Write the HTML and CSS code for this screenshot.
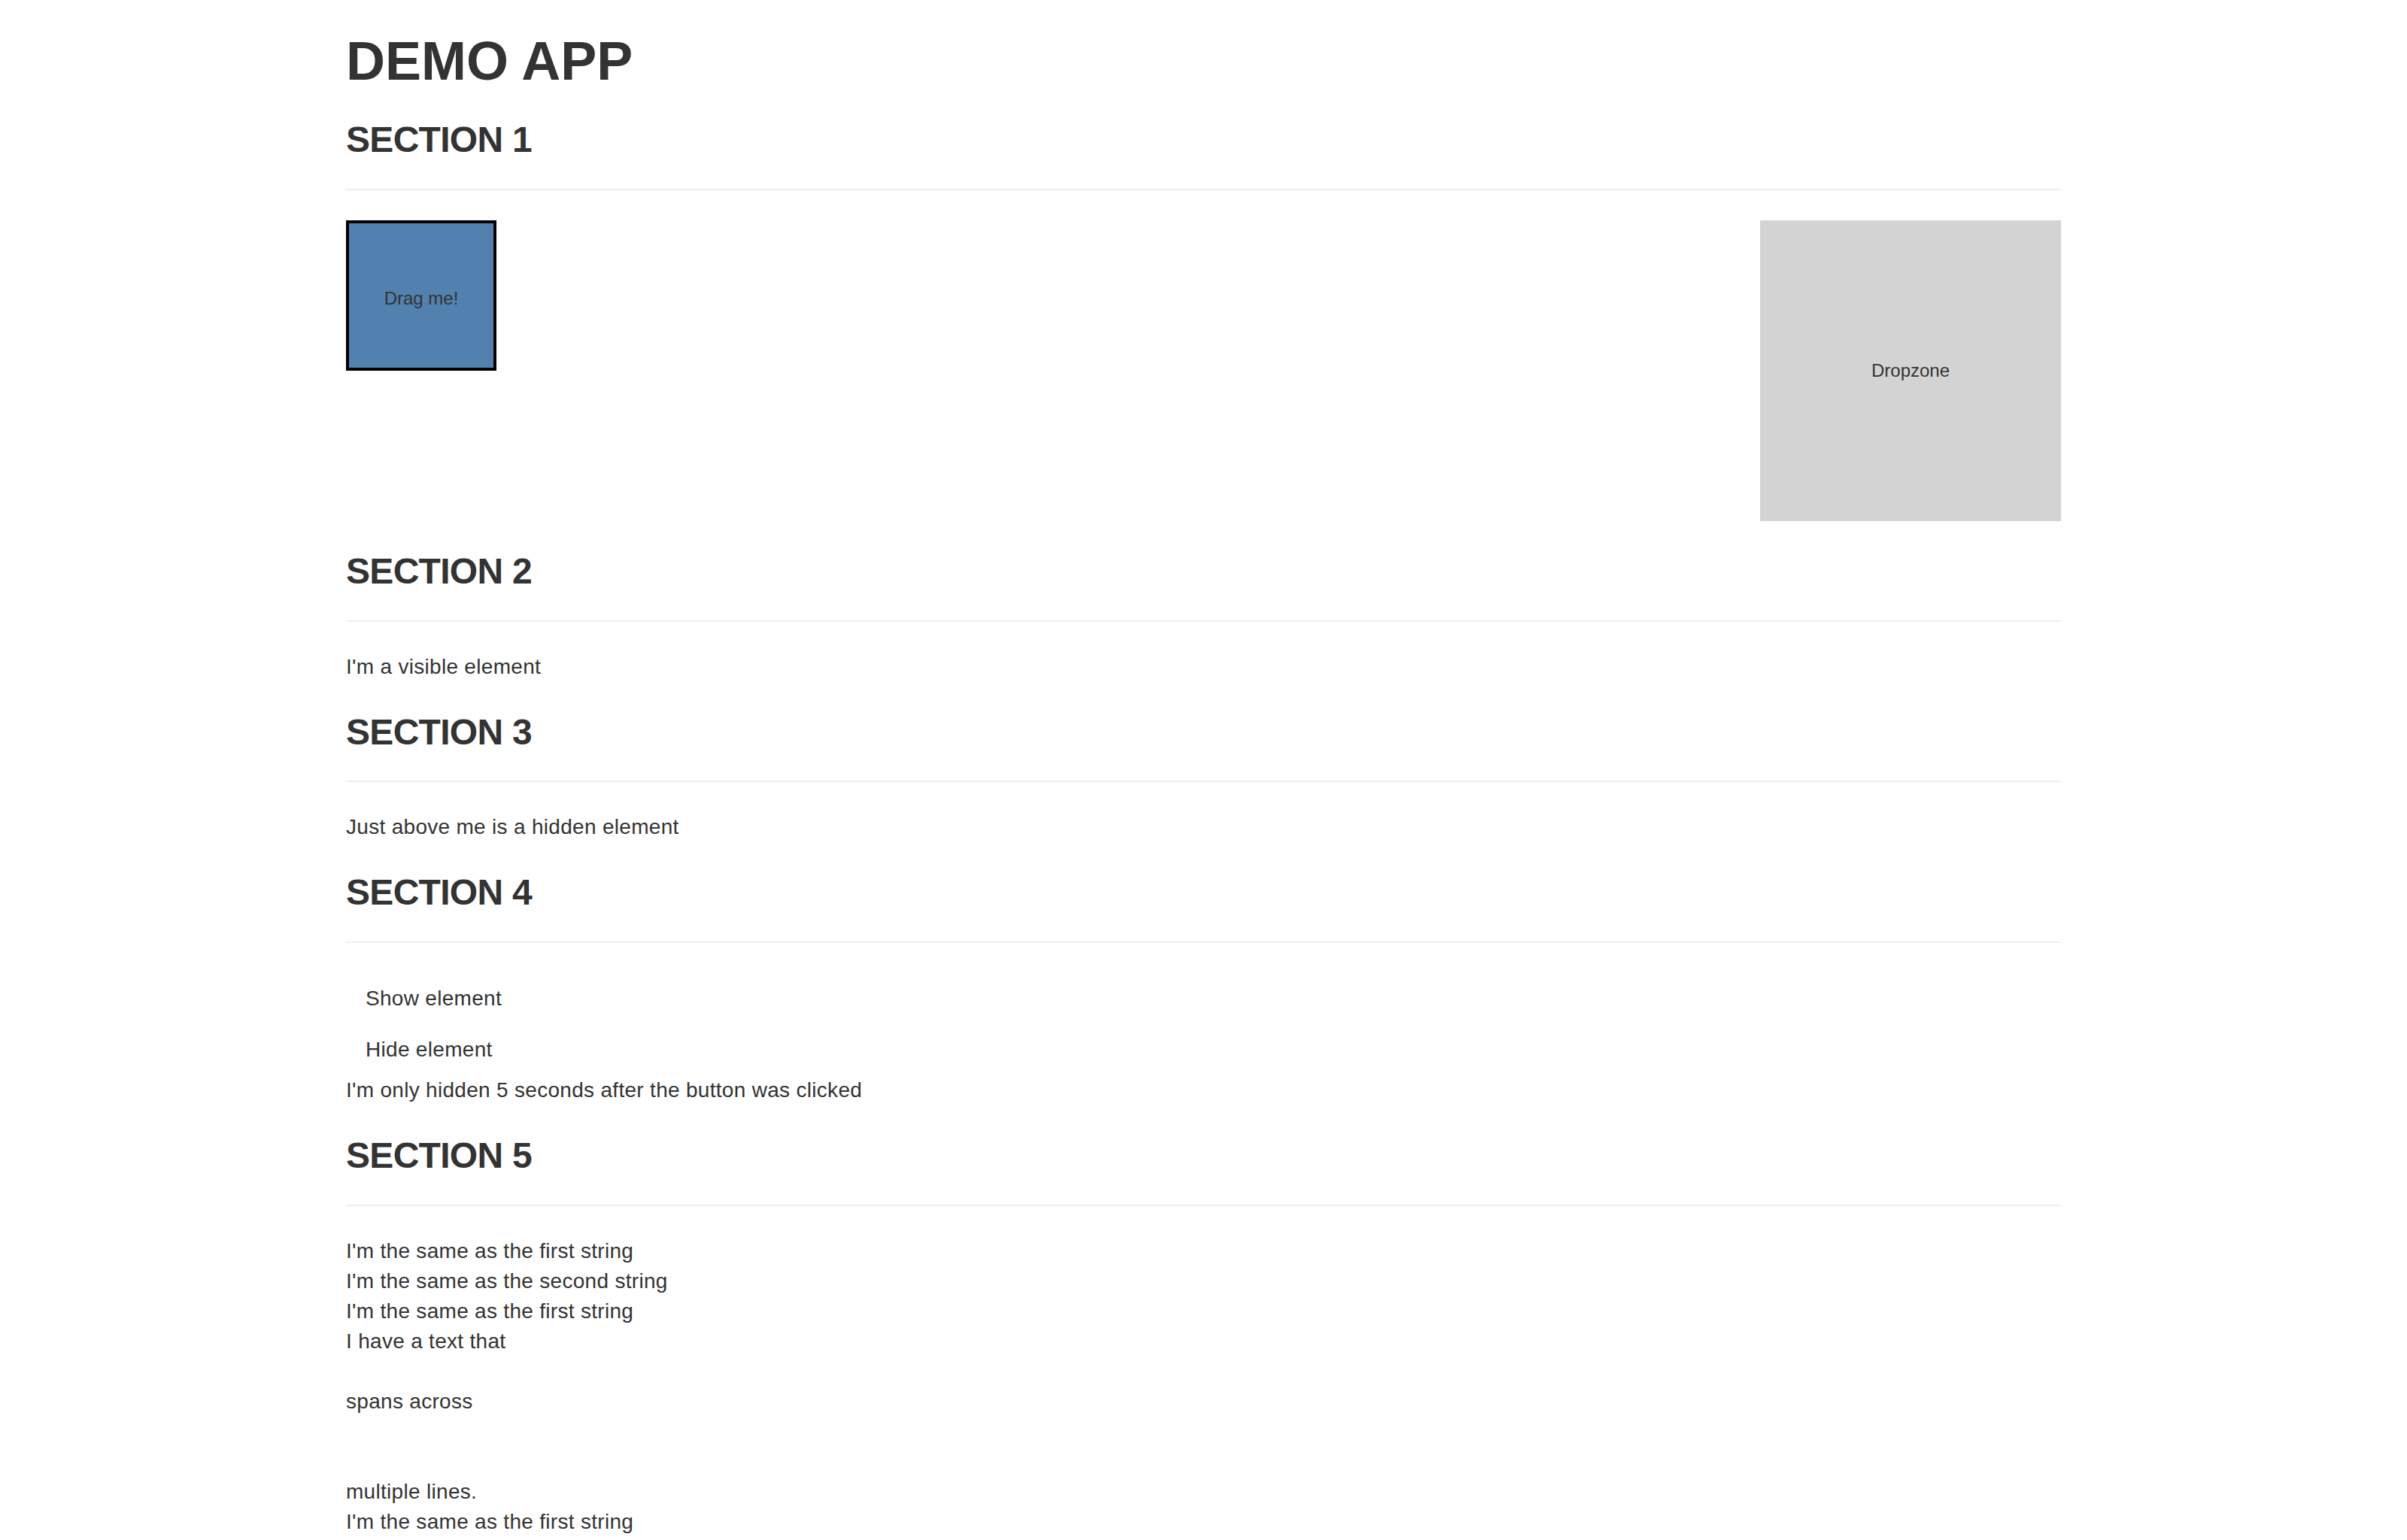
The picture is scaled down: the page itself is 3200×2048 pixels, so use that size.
FILE: index.html
```html
<!DOCTYPE html>
<html lang="en">
<head>
<meta charset="utf-8">
<title>Demo App</title>
<link rel="stylesheet" href="styles.css">
</head>
<body>
<div class="container">
  <h1 class="app-title">DEMO APP</h1>

  <section class="section">
    <h3 class="section-title">SECTION 1</h3>
    <div class="dnd-row">
      <div class="draggable">Drag me!</div>
      <div class="dropzone">Dropzone</div>
    </div>
  </section>

  <section class="section">
    <h3 class="section-title">SECTION 2</h3>
    <p class="text">I'm a visible element</p>
  </section>

  <section class="section">
    <h3 class="section-title">SECTION 3</h3>
    <div class="hidden">I'm a hidden element</div>
    <p class="text">Just above me is a hidden element</p>
  </section>

  <section class="section">
    <h3 class="section-title">SECTION 4</h3>
    <div><button class="btn" type="button">Show element</button></div>
    <div><button class="btn" type="button">Hide element</button></div>
    <p class="text">I'm only hidden 5 seconds after the button was clicked</p>
  </section>

  <section class="section">
    <h3 class="section-title">SECTION 5</h3>
    <div class="line">I'm the same as the first string</div>
    <div class="line">I'm the same as the second string</div>
    <div class="line">I'm the same as the first string</div>
    <div class="line">I have a text that<br><br>spans across<br><br><br>multiple lines.</div>
    <div class="line">I'm the same as the first string</div>
  </section>
</div>
</body>
</html>
```

FILE: styles.css
```css
html, body {
  margin: 0;
  padding: 0;
  background: #ffffff;
}

body {
  font-family: "Liberation Sans", Arial, Helvetica, sans-serif;
  font-size: 28px;
  line-height: 40px;
  color: #333333;
}

.container {
  width: 2280px;
  margin: 0 auto;
}

.app-title {
  font-size: 72px;
  line-height: 76px;
  font-weight: 700;
  margin: 43px 0 20px;
}

.section-title {
  font-size: 48px;
  line-height: 52.8px;
  font-weight: 700;
  letter-spacing: -0.7px;
  margin: 41px 0 40px;
  padding-bottom: 38px;
  border-bottom: 2px solid #eeeeee;
}

.dnd-row {
  display: flex;
  justify-content: space-between;
  align-items: flex-start;
}

.draggable {
  box-sizing: border-box;
  width: 200px;
  height: 200px;
  border: 4px solid #000000;
  background: #5281b0;
  display: flex;
  align-items: center;
  justify-content: center;
  padding-top: 8px;
  font-size: 24px;
  line-height: 34px;
  color: #333333;
}

.dropzone {
  width: 400px;
  height: 400px;
  background: #d3d3d3;
  display: flex;
  align-items: center;
  justify-content: center;
  font-size: 24px;
  line-height: 34px;
  color: #333333;
}

.text {
  margin: 0 0 20px;
  letter-spacing: 0.3px;
}

.hidden {
  display: none;
}

.btn {
  font-family: inherit;
  font-size: 28px;
  line-height: 40px;
  letter-spacing: 0.3px;
  color: #333333;
  background: transparent;
  border: 2px solid transparent;
  padding: 12px 24px;
  margin: 0;
  cursor: pointer;
}

.line {
  margin: 0;
  letter-spacing: 0.3px;
}
```
